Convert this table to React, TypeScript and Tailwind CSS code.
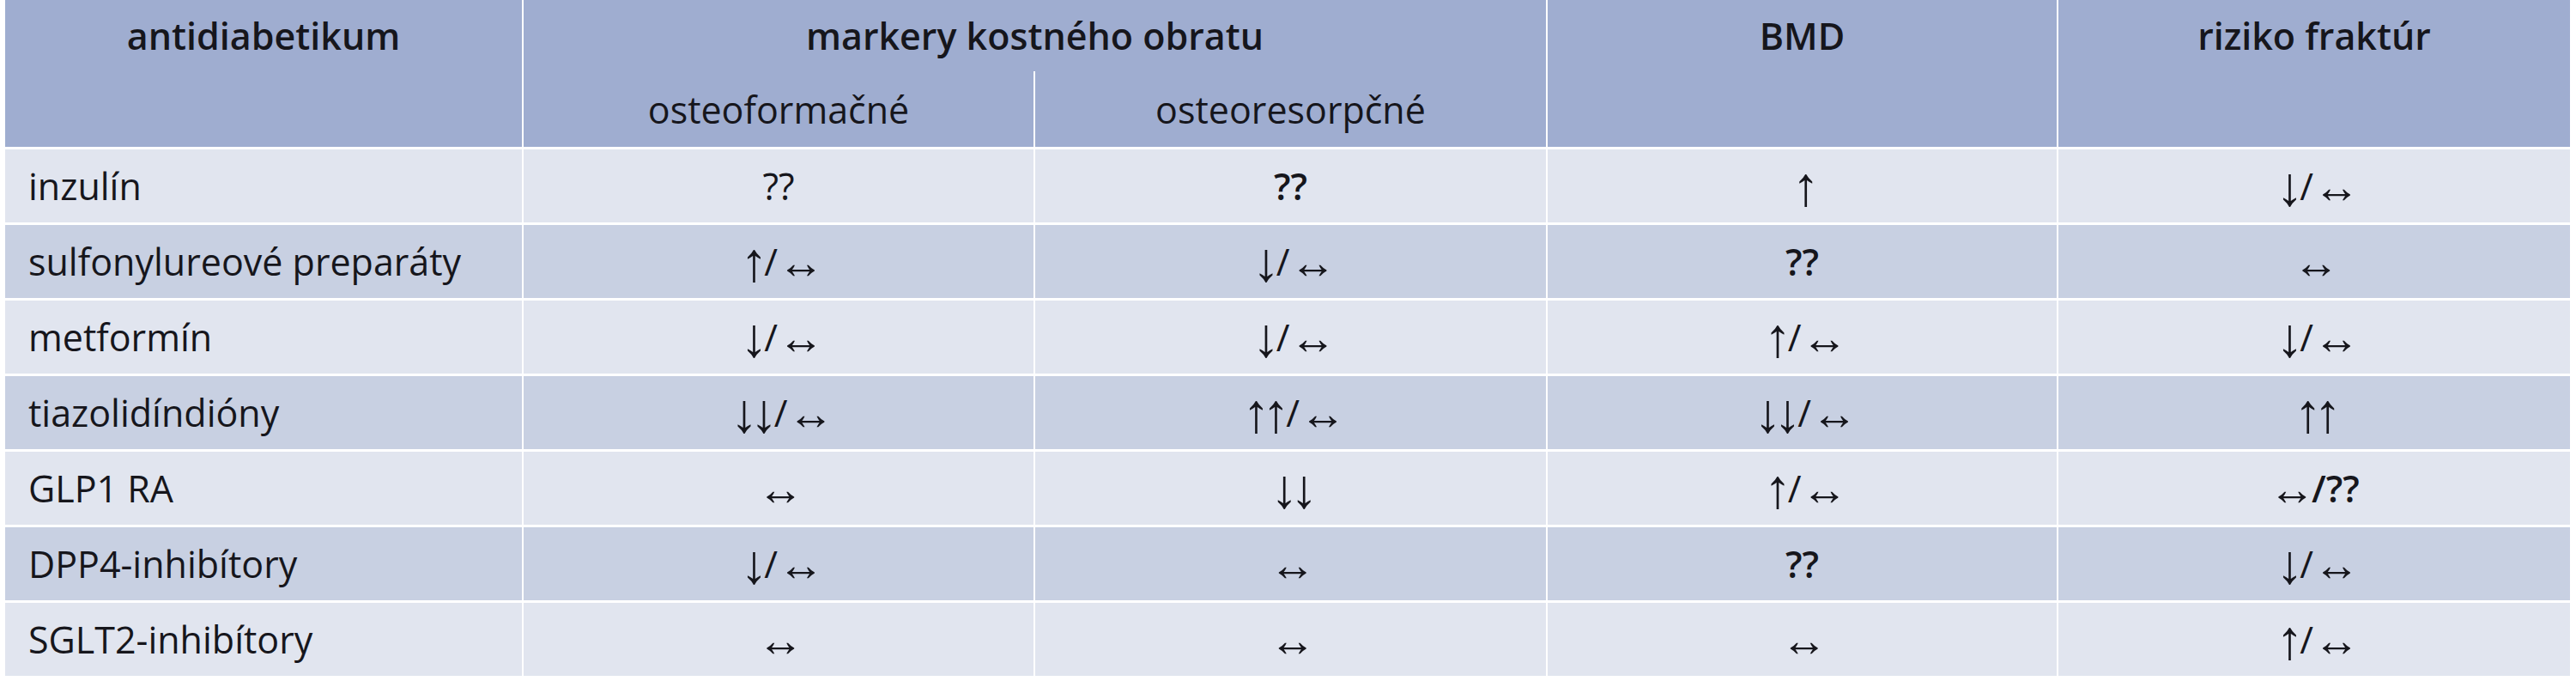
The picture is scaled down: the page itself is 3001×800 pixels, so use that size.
import React from "react";

type Row = {
  name: string;
  cells: { v: string; bold?: boolean }[];
};

const rows: Row[] = [
  { name: "inzulín", cells: [{ v: "??" }, { v: "??", bold: true }, { v: "↑" }, { v: "↓/↔" }] },
  { name: "sulfonylureové preparáty", cells: [{ v: "↑/↔" }, { v: "↓/↔" }, { v: "??", bold: true }, { v: "↔" }] },
  { name: "metformín", cells: [{ v: "↓/↔" }, { v: "↓/↔" }, { v: "↑/↔" }, { v: "↓/↔" }] },
  { name: "tiazolidíndióny", cells: [{ v: "↓↓/↔" }, { v: "↑↑/↔" }, { v: "↓↓/↔" }, { v: "↑↑" }] },
  { name: "GLP1 RA", cells: [{ v: "↔" }, { v: "↓↓" }, { v: "↑/↔" }, { v: "↔/??", bold: true }] },
  { name: "DPP4-inhibítory", cells: [{ v: "↓/↔" }, { v: "↔" }, { v: "??", bold: true }, { v: "↓/↔" }] },
  { name: "SGLT2-inhibítory", cells: [{ v: "↔" }, { v: "↔" }, { v: "↔" }, { v: "↑/↔" }] },
];

// split a value into runs: vertical arrows, horizontal arrows, plain text
function runs(v: string) {
  const out: { kind: "v" | "h" | "t"; s: string }[] = [];
  for (const ch of Array.from(v)) {
    const kind = ch === "↑" || ch === "↓" ? "v" : ch === "↔" ? "h" : "t";
    const last = out[out.length - 1];
    if (last && last.kind === kind) last.s += ch;
    else out.push({ kind, s: ch });
  }
  return out;
}

function Value({ v, bold }: { v: string; bold?: boolean }) {
  return (
    <span className={`inline-flex items-center ${bold ? "font-semibold" : "font-normal"}`}>
      {runs(v).map((r, i) => {
        if (r.kind === "v")
          return (
            <span key={i} className="font-['Liberation_Sans'] font-normal text-[64px] leading-none tracking-[-0.14em] pl-[4px] pr-[5px]">
              {r.s}
            </span>
          );
        if (r.kind === "h")
          return (
            <span key={i} className="font-['Liberation_Sans'] font-bold text-[54px] leading-none tracking-[-0.08em]">
              {r.s}
            </span>
          );
        return <span key={i}>{r.s}</span>;
      })}
    </span>
  );
}

export default function App() {
  return (
    <div className="w-[3001px] h-[800px] bg-white pl-[6px] font-['Open_Sans',sans-serif] text-[43px] leading-none text-[#16161c]">
      <div className="w-[2988px]">
        {/* Header */}
        <div className="grid grid-cols-[602px_594px_595px_593px_596px] grid-rows-[83px_88px] gap-x-[2px] bg-white">
          <div className="row-span-2 bg-[#9fadd0]">
            <div className="h-[83px] flex items-center justify-center font-semibold">antidiabetikum</div>
          </div>
          <div className="col-span-2 bg-[#9fadd0] flex items-center justify-center font-semibold">
            markery kostného obratu
          </div>
          <div className="row-span-2 bg-[#9fadd0]">
            <div className="h-[83px] flex items-center justify-center font-semibold">BMD</div>
          </div>
          <div className="row-span-2 bg-[#9fadd0]">
            <div className="h-[83px] flex items-center justify-center font-semibold">riziko fraktúr</div>
          </div>
          <div className="bg-[#9fadd0] flex items-center justify-center">osteoformačné</div>
          <div className="bg-[#9fadd0] flex items-center justify-center">osteoresorpčné</div>
        </div>

        {/* Body */}
        <div className="mt-[3px] flex flex-col gap-y-[3px]">
          {rows.map((r, idx) => {
            const bg = idx % 2 === 0 ? "bg-[#e1e5ef]" : "bg-[#c8d0e2]";
            return (
              <div
                key={r.name}
                className="grid grid-cols-[602px_594px_595px_593px_596px] h-[85px] gap-x-[2px]"
              >
                <div className={`${bg} flex items-center pl-[27px]`}>{r.name}</div>
                {r.cells.map((c, i) => (
                  <div key={i} className={`${bg} flex items-center justify-center`}>
                    <Value v={c.v} bold={c.bold} />
                  </div>
                ))}
              </div>
            );
          })}
        </div>
      </div>
    </div>
  );
}
